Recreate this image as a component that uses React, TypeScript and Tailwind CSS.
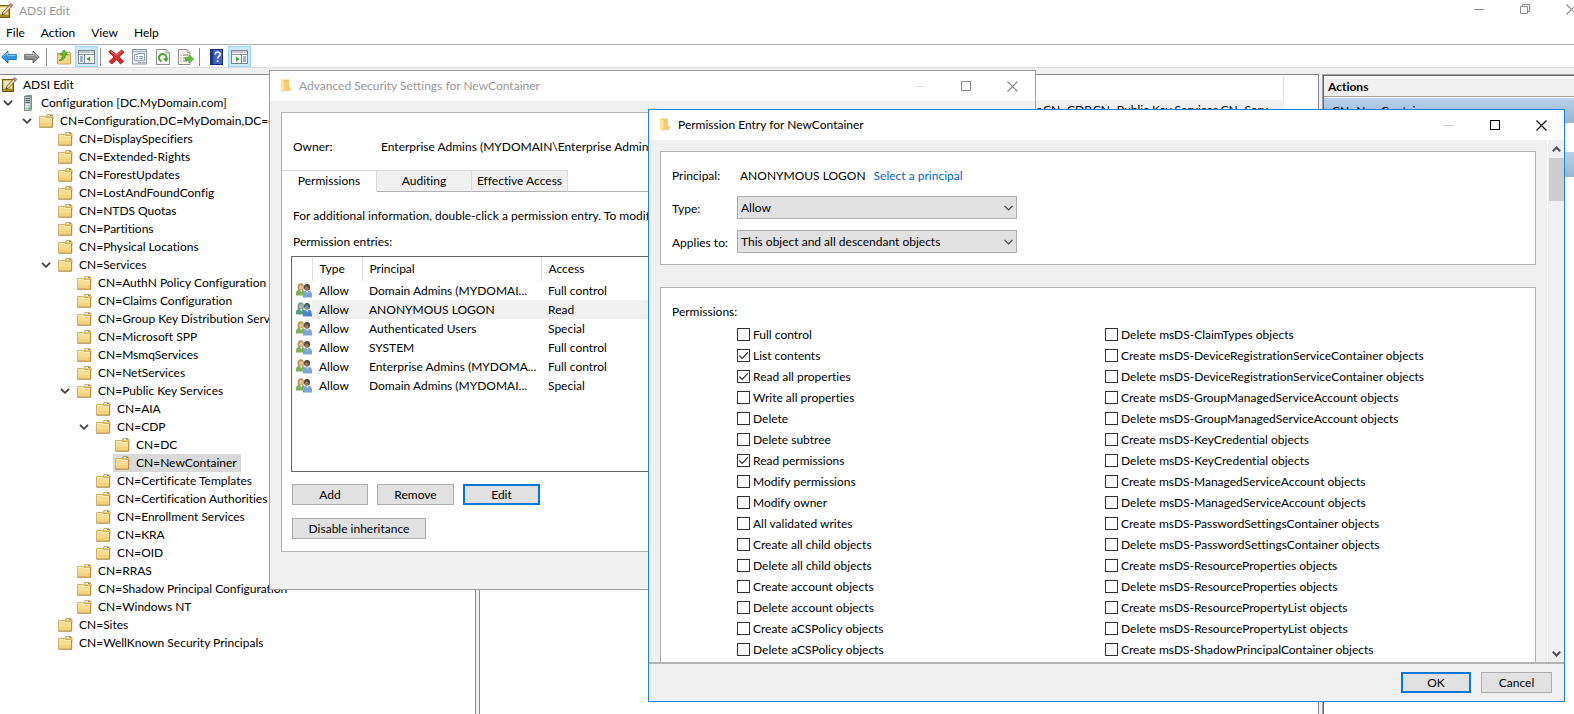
import type { ReactNode } from "react";

type TreeNode = { label: string; depth: number; open?: boolean; icon?: "app" | "server"; selected?: boolean };

const indent = [
  "pl-0",
  "pl-0",
  "pl-[19px]",
  "pl-[38px]",
  "pl-[57px]",
  "pl-[76px]",
  "pl-[95px]",
];

const tree: TreeNode[] = [
  { label: "ADSI Edit", depth: 0, icon: "app" },
  { label: "Configuration [DC.MyDomain.com]", depth: 1, open: true, icon: "server" },
  { label: "CN=Configuration,DC=MyDomain,DC=com", depth: 2, open: true },
  { label: "CN=DisplaySpecifiers", depth: 3 },
  { label: "CN=Extended-Rights", depth: 3 },
  { label: "CN=ForestUpdates", depth: 3 },
  { label: "CN=LostAndFoundConfig", depth: 3 },
  { label: "CN=NTDS Quotas", depth: 3 },
  { label: "CN=Partitions", depth: 3 },
  { label: "CN=Physical Locations", depth: 3 },
  { label: "CN=Services", depth: 3, open: true },
  { label: "CN=AuthN Policy Configuration", depth: 4 },
  { label: "CN=Claims Configuration", depth: 4 },
  { label: "CN=Group Key Distribution Service", depth: 4 },
  { label: "CN=Microsoft SPP", depth: 4 },
  { label: "CN=MsmqServices", depth: 4 },
  { label: "CN=NetServices", depth: 4 },
  { label: "CN=Public Key Services", depth: 4, open: true },
  { label: "CN=AIA", depth: 5 },
  { label: "CN=CDP", depth: 5, open: true },
  { label: "CN=DC", depth: 6 },
  { label: "CN=NewContainer", depth: 6, selected: true },
  { label: "CN=Certificate Templates", depth: 5 },
  { label: "CN=Certification Authorities", depth: 5 },
  { label: "CN=Enrollment Services", depth: 5 },
  { label: "CN=KRA", depth: 5 },
  { label: "CN=OID", depth: 5 },
  { label: "CN=RRAS", depth: 4 },
  { label: "CN=Shadow Principal Configuration", depth: 4 },
  { label: "CN=Windows NT", depth: 4 },
  { label: "CN=Sites", depth: 3 },
  { label: "CN=WellKnown Security Principals", depth: 3 },
];

const entries = [
  { principal: "Domain Admins (MYDOMAI...", access: "Full control" },
  { principal: "ANONYMOUS LOGON", access: "Read", selected: true },
  { principal: "Authenticated Users", access: "Special" },
  { principal: "SYSTEM", access: "Full control" },
  { principal: "Enterprise Admins (MYDOMA...", access: "Full control" },
  { principal: "Domain Admins (MYDOMAI...", access: "Special" },
];

const leftPermissions = [
  "Full control",
  "List contents",
  "Read all properties",
  "Write all properties",
  "Delete",
  "Delete subtree",
  "Read permissions",
  "Modify permissions",
  "Modify owner",
  "All validated writes",
  "Create all child objects",
  "Delete all child objects",
  "Create account objects",
  "Delete account objects",
  "Create aCSPolicy objects",
  "Delete aCSPolicy objects",
];

const rightPermissions = [
  "Delete msDS-ClaimTypes objects",
  "Create msDS-DeviceRegistrationServiceContainer objects",
  "Delete msDS-DeviceRegistrationServiceContainer objects",
  "Create msDS-GroupManagedServiceAccount objects",
  "Delete msDS-GroupManagedServiceAccount objects",
  "Create msDS-KeyCredential objects",
  "Delete msDS-KeyCredential objects",
  "Create msDS-ManagedServiceAccount objects",
  "Delete msDS-ManagedServiceAccount objects",
  "Create msDS-PasswordSettingsContainer objects",
  "Delete msDS-PasswordSettingsContainer objects",
  "Create msDS-ResourceProperties objects",
  "Delete msDS-ResourceProperties objects",
  "Create msDS-ResourcePropertyList objects",
  "Delete msDS-ResourcePropertyList objects",
  "Create msDS-ShadowPrincipalContainer objects",
];

const granted = ["List contents", "Read all properties", "Read permissions"];

/* ---------- icons ---------- */

function AppIcon() {
  return (
    <svg width="16" height="16" viewBox="1 0 16 16" className="shrink-0">
      <rect x="1.500" y="2.500" width="11" height="12" fill="#c9a227" stroke="#6b5a1c" />
      <rect x="2.500" y="3.500" width="8.500" height="8" fill="#f0e3a8" />
      <path d="M3.500 5.500h5M3.500 7.500h4" stroke="#fff8dc" />
      <path d="M2 12h10v2H2z" fill="#a9851c" />
      <path d="M5 12l0.800-2.800L12.500 2l2 1.700-6.700 7.200z" fill="#ecd6b0" stroke="#5a4a3a" strokeWidth="0.800" />
      <path d="M12.300 2l1.400-1.500 2.200 1.800-1.400 1.600z" fill="#c98a8e" stroke="#8a4a50" strokeWidth="0.600" />
      <path d="M5 12l0.500-1.700 1.200 1z" fill="#222" />
    </svg>
  );
}

function ServerIcon() {
  return (
    <svg width="16" height="16" viewBox="0 0 16 16" className="shrink-0">
      <path d="M4.500 1.500L6 0h6v14l-1.500 1.500h-6z" fill="#87949a" />
      <rect x="4.500" y="1.500" width="6.500" height="14" fill="#bfcdd3" stroke="#74828a" strokeWidth="0.800" />
      <path d="M5.500 3.500h4.500M5.500 5.500h4.500M5.500 7.500h4.500" stroke="#4d5d66" />
      <path d="M5.500 9.500h4.500M5.500 11.500h3" stroke="#e8f1f4" />
      <rect x="8.500" y="12.500" width="2" height="2" fill="#4fd02a" />
    </svg>
  );
}

function FolderIcon() {
  return (
    <svg width="16" height="16" viewBox="1 0 16 16" className="shrink-0">
      <path d="M8 3l1-1.500h5L15 3v3H8z" fill="#ecc970" stroke="#c39d4e" strokeWidth="0.800" />
      <rect x="10" y="2" width="3" height="1" fill="#fff" />
      <rect x="12" y="2" width="1.500" height="1" fill="#4a8fd0" />
      <path d="M1.500 3.500H7l1.200 1H14.500v9.500h-13z" fill="#f8dd90" stroke="#cdaa60" strokeWidth="0.900" />
      <path d="M2.300 4.500h4.400l1.300 1h5.700" stroke="#fdf0c0" fill="none" />
      <path d="M2 10h12v3.500H2z" fill="#f3d17d" />
      <path d="M1.500 14.200h13.200V5" stroke="#a98744" fill="none" strokeWidth="0.900" />
    </svg>
  );
}

function OpenFolderIcon() {
  return (
    <svg width="10" height="14" viewBox="0 0 10 14" className="shrink-0">
      <path d="M0 0.500h5l3 0V8h1.500v4H3z" fill="#f3cf6d" />
      <path d="M0 0.500l3.200 1.500v12L0 12z" fill="#fde49b" />
      <path d="M3.200 2h4V0.500" fill="none" stroke="#e3b84e" strokeWidth="0.500" />
    </svg>
  );
}

function PeopleIcon({ selected }: { selected?: boolean }) {
  return (
    <svg width="16" height="15" viewBox="0 0 16 15" className="block">
      <path d="M1.500 4.500C1.500 1.500 3 0.300 4.800 0.300S8.200 1.500 8 5l-1 3H2z" fill={selected ? "#7f9a8f" : "#b39a55"} />
      <ellipse cx="5.200" cy="4.500" rx="1.900" ry="2.400" fill={selected ? "#a9b9b4" : "#e0c49a"} />
      <path d="M0 12.500V10c0-2 1.800-3 3.600-3h2.200c1.900 0 3 1 3 3v2.500z" fill={selected ? "#4f9f86" : "#7fae55"} />
      <path d="M4 7l1.300 2.400L6.500 7z" fill="#eef3e6" />
      <ellipse cx="11" cy="4.300" rx="3" ry="3.200" fill={selected ? "#3d5872" : "#4b3f38"} />
      <ellipse cx="10.700" cy="5.500" rx="1.900" ry="2.300" fill={selected ? "#8193a0" : "#a9744f"} />
      <path d="M7 14.500v-3.200C7 9.200 8.300 8 10.200 8h2.200C14.500 8 16 9.200 16 11.300v3.200z" fill={selected ? "#4a86c8" : "#7ba5d6"} />
      <path d="M10 8l1.200 2.400L12.400 8z" fill="#dfe9f5" />
      {selected && <rect x="15" y="10" width="1" height="2" fill="#a8e000" />}
    </svg>
  );
}

function TreeChevron() {
  return (
    <svg width="10" height="6" viewBox="0 0 10 6" className="ml-[3px]">
      <path d="M1 0.800l4 4 4-4" fill="none" stroke="#404040" strokeWidth="1.800" />
    </svg>
  );
}

function MinimizeGlyph() {
  return (
    <svg width="10" height="11" viewBox="0 0 10 11">
      <path d="M0 5.500h10" stroke="currentColor" />
    </svg>
  );
}
function MaximizeGlyph() {
  return (
    <svg width="10" height="10" viewBox="0 0 10 10">
      <rect x="0.500" y="0.500" width="9" height="9" fill="none" stroke="currentColor" />
    </svg>
  );
}
function RestoreGlyph() {
  return (
    <svg width="10" height="10" viewBox="0 0 10 10">
      <path d="M2.500 2.500v-2h7v7h-2M0.500 2.500h7v7h-7z" fill="none" stroke="currentColor" />
    </svg>
  );
}
function CloseGlyph() {
  return (
    <svg width="11" height="11" viewBox="0 0 11 11">
      <path d="M0.500 0.500l10 10M10.500 0.500l-10 10" stroke="currentColor" strokeWidth="1.100" />
    </svg>
  );
}

function ArrowIcon({ forward }: { forward?: boolean }) {
  return (
    <svg width="16" height="14" viewBox="0 0 16 14" className={forward ? "-scale-x-100" : ""}>
      <path
        d="M0.700 7L7 1v3.500h8.300v5H7V13z"
        fill={forward ? "#8f8f8f" : "#2f9be8"}
        stroke={forward ? "#5f5f5f" : "#1769b0"}
        strokeWidth="0.900"
        strokeLinejoin="round"
      />
      <path d="M2.500 6.500L6.500 2.800v2.600h8" fill="none" stroke={forward ? "#c2c2c2" : "#8fd0fa"} />
    </svg>
  );
}

function FolderUpIcon() {
  return (
    <svg width="16" height="16" viewBox="0 0 16 16">
      <path d="M1.500 4.500H8L9.500 3H14l0.500 1.500V15h-13z" fill="#e9c26a" stroke="#b98f36" strokeWidth="0.800" />
      <rect x="11" y="4" width="2.500" height="1" fill="#fff" />
      <rect x="2" y="7" width="12" height="7.500" fill="#f5d587" />
      <path d="M3 11.500C5.500 11 6.500 9 6.300 5.500h-2L8 1l3.500 4.500h-2c0 3.500-2.700 6.500-6.500 6z" fill="#5cc33c" stroke="#2f7d1a" strokeWidth="0.700" />
    </svg>
  );
}

function PaneIcon({ right }: { right?: boolean }) {
  return (
    <svg width="17" height="14" viewBox="0 0 17 14">
      <rect x="0.500" y="0.500" width="16" height="13" fill="#f4f6f8" stroke="#7b858e" />
      <path d="M1 2h15M1 4.500h15" stroke="#8b959e" strokeWidth="1.200" />
      <path d="M12 2h1M14 2h1" stroke="#fff" />
      <path d={right ? "M10.500 5v8" : "M6.500 5v8"} stroke="#7b858e" />
      <path d={right ? "M12 7h3M12 9h3M12 11h3" : "M2 7h3M2 9h3M2 11h3"} stroke="#4a6f9a" />
      <path d={right ? "M5 6.500v5l3.500-2.500z" : "M12 6.500v5L8.500 9z"} fill="#3fa62c" />
    </svg>
  );
}

function DeleteIcon() {
  return (
    <svg width="17" height="16" viewBox="0 0 17 16">
      <path
        d="M2.500 1L8.500 5.500 13.500 1 16 3l-4.800 5 4.300 4.500-3 2.500-4-4.500-4.500 4.500L1 12.500 6 8 0.800 3z"
        fill="#dc2a26"
        stroke="#a51512"
        strokeWidth="0.800"
        strokeLinejoin="round"
      />
      <path d="M2.800 2.300l5.700 4.500 5-4.500" fill="none" stroke="#f0807c" strokeWidth="0.900" />
    </svg>
  );
}

function PropertiesIcon() {
  return (
    <svg width="15" height="16" viewBox="0 0 15 16">
      <rect x="0.500" y="0.500" width="14" height="14.500" fill="#f2f4f6" stroke="#8b959e" />
      <path d="M1 2.500h13" stroke="#aeb8c0" strokeWidth="1.500" />
      <path d="M2.500 11.500v-6h3v-1h7v7z" fill="#fff" stroke="#8b9aa8" />
      <path d="M4 7.500h2M7 7.500h4M4 9.500h2M7 9.500h4" stroke="#7fa0c4" />
      <path d="M6 13.500h3M10 13.500h3" stroke="#8b959e" />
    </svg>
  );
}

function RefreshIcon() {
  return (
    <svg width="14" height="16" viewBox="0 0 14 16">
      <path d="M0.500 0.500h9.500l3.500 3.500v11.500H0.500z" fill="#fafafa" stroke="#8f8f8f" />
      <path d="M10 0.500v3.500h3.500" fill="#ddd" stroke="#8f8f8f" strokeWidth="0.800" />
      <path d="M5.500 12.200A3.700 3.700 0 1 1 10.300 9.500" fill="none" stroke="#3fa62c" strokeWidth="2" />
      <path d="M7 9.200h6l-3 3.800z" fill="#3fa62c" />
    </svg>
  );
}

function ExportIcon() {
  return (
    <svg width="16" height="16" viewBox="0 0 16 16">
      <path d="M0.500 0.500h8.500l3 3v12H0.500z" fill="#fbf8ea" stroke="#8f8f8f" />
      <path d="M9 0.500v3h3" fill="#ddd" stroke="#8f8f8f" strokeWidth="0.800" />
      <path d="M2.500 6h1M5 6h5M2.500 9h1M5 9h3M2.500 12h1M5 12h4" stroke="#777" />
      <path d="M7.500 8.500h3.500V6l4.800 4-4.800 4v-2.500H7.500z" fill="#5cc33c" stroke="#3a8c22" strokeWidth="0.600" />
    </svg>
  );
}

function HelpIcon() {
  return (
    <svg width="13" height="16" viewBox="0 0 13 16">
      <rect x="0.500" y="0.500" width="12" height="15" fill="#3f63c4" stroke="#1c2f78" />
      <path d="M1 1h2.500v14H1z" fill="#22398c" />
      <path d="M5.200 5.500c0-3.200 5-3.200 5-0.300 0 2-2.500 2-2.500 4.300" fill="none" stroke="#fff" strokeWidth="1.600" />
      <rect x="6.800" y="11.200" width="1.800" height="1.800" fill="#fff" />
    </svg>
  );
}

/* ---------- shared pieces ---------- */

function CaptionButtons({
  restore,
  tone,
  minTone,
}: {
  restore?: boolean;
  tone: string;
  minTone: string;
}) {
  return (
    <div className={`flex shrink-0 self-stretch ${tone}`}>
      <button type="button" aria-label="Minimize" className={`flex w-[46px] items-center justify-center ${minTone}`}>
        <MinimizeGlyph />
      </button>
      <button type="button" aria-label="Maximize" className="flex w-[46px] items-center justify-center">
        {restore ? <RestoreGlyph /> : <MaximizeGlyph />}
      </button>
      <button type="button" aria-label="Close" className="flex w-[46px] items-center justify-center">
        <CloseGlyph />
      </button>
    </div>
  );
}

function PushButton({ children, width, primary }: { children: ReactNode; width: string; primary?: boolean }) {
  return (
    <button
      type="button"
      className={`flex h-[21px] items-center justify-center bg-[#e1e1e1] ${width} ${
        primary ? "border-2 border-[#0078d7]" : "border border-[#adadad]"
      }`}
    >
      {children}
    </button>
  );
}

function ToolButton({ label, active, children }: { label: string; active?: boolean; children: ReactNode }) {
  return (
    <button
      type="button"
      aria-label={label}
      className={`flex h-[21px] w-[23px] items-center justify-center border ${
        active ? "border-[#99d1ff] bg-[#cce8ff]" : "border-transparent"
      }`}
    >
      {children}
    </button>
  );
}

function Separator() {
  return <span className="h-[18px] w-px bg-[#8d8d8d]" />;
}

function Dropdown({ id, options }: { id: string; options: string[] }) {
  return (
    <div className="grid w-[280px] items-center">
      <select
        id={id}
        className="col-start-1 row-start-1 h-[23px] w-full appearance-none border border-[#adadad] bg-[#e1e1e1] pl-[3px]"
      >
        {options.map((option) => (
          <option key={option}>{option}</option>
        ))}
      </select>
      <svg
        width="9"
        height="6"
        viewBox="0 0 9 6"
        className="pointer-events-none col-start-1 row-start-1 mr-1 justify-self-end"
      >
        <path d="M0.500 0.800l4 4 4-4" fill="none" stroke="#444" strokeWidth="1.200" />
      </svg>
    </div>
  );
}

function PermissionList({ names }: { names: string[] }) {
  return (
    <ul>
      {names.map((name) => (
        <li key={name} className="flex h-[21px] items-center">
          <label className="flex items-center gap-[3px] whitespace-nowrap">
            <span className="grid">
              <input
                type="checkbox"
                defaultChecked={granted.includes(name)}
                className="peer col-start-1 row-start-1 size-[13px] appearance-none border border-[#333] bg-white"
              />
              <svg
                width="13"
                height="13"
                viewBox="0 0 13 13"
                className="pointer-events-none invisible col-start-1 row-start-1 peer-checked:visible"
              >
                <path d="M2.300 6.500l2.900 2.900 5.600-6" fill="none" stroke="#333" strokeWidth="1.200" />
              </svg>
            </span>
            {name}
          </label>
        </li>
      ))}
    </ul>
  );
}

/* ---------- windows ---------- */

function MainWindow() {
  return (
    <div className="flex h-full flex-col bg-white">
      <header className="flex h-[22px] shrink-0 items-center justify-between overflow-hidden">
        <h1 className="flex items-center gap-[5px] text-[#999]">
          <span className="-ml-0.5 flex">
            <AppIcon />
          </span>
          ADSI Edit
        </h1>
        <div className="-mr-5 flex h-[18px] self-start">
          <CaptionButtons restore tone="text-[#8a8a8a]" minTone="" />
        </div>
      </header>
      <nav className="flex h-[22px] shrink-0 items-center gap-4 pl-[6px]">
        <button type="button">File</button>
        <button type="button">Action</button>
        <button type="button">View</button>
        <button type="button">Help</button>
      </nav>
      <div className="flex h-6 shrink-0 items-end border-t border-b border-t-[#b0b0b0] border-b-[#dcdcdc]">
        <div className="-ml-[3px] flex items-center">
          <ToolButton label="Back">
            <ArrowIcon />
          </ToolButton>
          <ToolButton label="Forward">
            <ArrowIcon forward />
          </ToolButton>
        </div>
        <div className="ml-[3px] flex items-center gap-[5px]">
          <Separator />
          <div className="flex items-center">
            <ToolButton label="Up one level">
              <FolderUpIcon />
            </ToolButton>
            <ToolButton label="Show console tree" active>
              <PaneIcon />
            </ToolButton>
          </div>
        </div>
        <div className="ml-[2px] flex items-center gap-1">
          <Separator />
          <div className="flex items-center">
            <ToolButton label="Delete">
              <DeleteIcon />
            </ToolButton>
            <ToolButton label="Properties">
              <PropertiesIcon />
            </ToolButton>
            <ToolButton label="Refresh">
              <RefreshIcon />
            </ToolButton>
            <ToolButton label="Export list">
              <ExportIcon />
            </ToolButton>
          </div>
        </div>
        <div className="ml-[2px] flex items-center gap-[5px]">
          <Separator />
          <div className="flex items-center">
            <ToolButton label="Help">
              <HelpIcon />
            </ToolButton>
            <ToolButton label="Show action pane" active>
              <PaneIcon right />
            </ToolButton>
          </div>
        </div>
      </div>
      <div className="flex min-h-0 flex-1 bg-[#f0f0f0] pt-[6px]">
        <aside className="w-[476px] shrink-0 overflow-hidden border-t border-r border-[#828790] bg-white pt-px">
          <ul>
            {tree.map((node) => (
              <li key={node.label} className={`flex h-[18px] items-center ${indent[node.depth]}`}>
                {node.depth > 0 && <span className="w-[18px] shrink-0">{node.open && <TreeChevron />}</span>}
                <span
                  className={`flex h-[18px] items-center gap-[5px] pr-1 pl-[2px] whitespace-nowrap ${
                    node.selected ? "bg-[#d9d9d9]" : ""
                  }`}
                >
                  {node.icon === "app" ? <AppIcon /> : node.icon === "server" ? <ServerIcon /> : <FolderIcon />}
                  {node.label}
                </span>
              </li>
            ))}
          </ul>
        </aside>
        <main className="ml-[3px] min-w-0 flex-1 overflow-hidden border border-b-0 border-[#828790] bg-white pt-px pr-[34px]">
          <div className="h-6 border-r border-[#e0e0e0]" />
          <p className="flex h-[19px] items-center justify-end overflow-hidden bg-[#f0f0f0] pr-2 whitespace-nowrap">
            CN=NewContainer,CN=CDP,CN=Public Key Services,CN=Serv...
          </p>
        </main>
        <aside className="ml-[3px] w-[252px] shrink-0 border-t border-l border-[#a0a0a0]">
          <div className="h-full border-t border-l border-[#696969] bg-white pt-[2px]">
            <h2 className="flex h-[19px] items-center border-b border-[#a0a0a0] bg-[#f0f0f0] pl-1 font-bold">
              Actions
            </h2>
            <p className="mt-px flex h-[25px] items-center bg-linear-to-b from-[#b9d1ea] to-[#9ab4d3] pl-2">
              CN=NewContainer
            </p>
            <div className="mt-[29px] h-[25px] bg-linear-to-b from-[#b9d1ea] to-[#9ab4d3]" />
          </div>
        </aside>
      </div>
    </div>
  );
}

function SecurityDialog() {
  return (
    <section className="absolute top-[70px] left-[269px] w-[767px] border border-[#a0a0a0] bg-[#f0f0f0]">
      <header className="flex h-[30px] items-center justify-between bg-white pl-[11px]">
        <h2 className="flex items-center gap-2 text-[#999]">
          <OpenFolderIcon />
          Advanced Security Settings for NewContainer
        </h2>
        <CaptionButtons tone="text-[#8a8a8a]" minTone="text-[#e2e2e2]" />
      </header>
      <div className="px-[11px] pt-[11px] pb-[37px]">
        <div className="border border-[#b0b0b0] bg-white pt-6 pb-3">
          <dl className="flex h-5 items-center pl-[11px]">
            <dt className="w-[88px]">Owner:</dt>
            <dd>Enterprise Admins (MYDOMAIN\Enterprise Admins)</dd>
          </dl>
          <div role="tablist" className="mt-[13px] flex h-[22px]">
            <button
              type="button"
              role="tab"
              aria-selected
              className="w-[95px] border-t border-r border-b border-[#d9d9d9] border-b-white"
            >
              Permissions
            </button>
            <button
              type="button"
              role="tab"
              className="w-[95px] border-t border-r border-b border-[#d9d9d9] border-b-[#b0b0b0] bg-[#f0f0f0]"
            >
              Auditing
            </button>
            <button
              type="button"
              role="tab"
              className="w-[96px] border-t border-r border-b border-[#d9d9d9] border-b-[#b0b0b0] bg-[#f0f0f0]"
            >
              Effective Access
            </button>
            <span className="flex-1 border-b border-[#b0b0b0]" />
          </div>
          <div className="px-[9px]">
            <p className="mt-[14px] flex h-5 items-center pl-[2px] whitespace-nowrap">
              For additional information, double-click a permission entry. To modify
            </p>
            <p className="mt-[6px] flex h-5 items-center pl-[2px]">Permission entries:</p>
            <div className="mt-1 min-h-[216px] border border-[#646464]">
              <table className="w-full table-fixed border-collapse text-left">
                <thead>
                  <tr className="h-6">
                    <th className="w-5 border-r border-[#e0e0e0]" />
                    <th className="w-[50px] border-r border-[#e0e0e0] pl-[7px] font-normal">Type</th>
                    <th className="w-[179px] border-r border-[#e0e0e0] pl-[7px] font-normal">Principal</th>
                    <th className="pl-[7px] font-normal">Access</th>
                  </tr>
                </thead>
                <tbody>
                  {entries.map((entry, index) => {
                    const cell = entry.selected ? "bg-[#f0f0f0] p-0 pl-[7px]" : "p-0 pl-[7px]";
                    return (
                      <tr key={index} className="h-[19px] whitespace-nowrap">
                        <td className="p-0 pl-1">
                          <PeopleIcon selected={entry.selected} />
                        </td>
                        <td className={cell}>Allow</td>
                        <td className={cell}>{entry.principal}</td>
                        <td className={cell}>{entry.access}</td>
                      </tr>
                    );
                  })}
                </tbody>
              </table>
            </div>
            <div className="mt-3 flex gap-[9px] pl-px">
              <PushButton width="w-[76px]">Add</PushButton>
              <PushButton width="w-[77px]">Remove</PushButton>
              <PushButton width="w-[77px]" primary>
                Edit
              </PushButton>
            </div>
            <div className="mt-[13px] flex pl-px">
              <PushButton width="w-[134px]">Disable inheritance</PushButton>
            </div>
          </div>
        </div>
      </div>
    </section>
  );
}

function PermissionDialog() {
  return (
    <section className="absolute top-[109px] right-[9px] left-[648px] border border-[#1883d7] bg-[#f0f0f0]">
      <header className="flex h-[30px] items-center justify-between bg-white pl-[11px]">
        <h2 className="flex items-center gap-2">
          <OpenFolderIcon />
          Permission Entry for NewContainer
        </h2>
        <CaptionButtons tone="text-black" minTone="text-[#c8c8c8]" />
      </header>
      <div className="flex border-b-2 border-[#b4b4b4]">
        <div className="flex-1 px-[11px] pt-[11px]">
          <div className="flex flex-col border border-[#b0b0b0] bg-white pt-3 pb-[11px] pl-[11px]">
            <div className="flex h-6 items-center">
              <span className="w-[68px]">Principal:</span>
              <span>ANONYMOUS LOGON</span>
              <a href="#principal" className="ml-2 text-[#0066cc]">
                Select a principal
              </a>
            </div>
            <div className="mt-2 flex items-center">
              <label htmlFor="type" className="w-[65px] pt-0.5">
                Type:
              </label>
              <Dropdown id="type" options={["Allow", "Deny"]} />
            </div>
            <div className="mt-[11px] flex items-center">
              <label htmlFor="applies-to" className="w-[65px] pt-0.5">
                Applies to:
              </label>
              <Dropdown id="applies-to" options={["This object and all descendant objects", "This object only"]} />
            </div>
          </div>
          <div className="mt-[22px] border border-b-0 border-[#b0b0b0] bg-white pt-[14px] pb-[2px] pl-[11px]">
            <h3 className="flex h-5 items-center">Permissions:</h3>
            <div className="mt-[2px] grid grid-cols-[368px_1fr] pl-[65px]">
              <PermissionList names={leftPermissions} />
              <PermissionList names={rightPermissions} />
            </div>
          </div>
        </div>
        <div className="flex w-[17px] flex-col items-center border-l border-white">
          <svg width="9" height="6" viewBox="0 0 9 6" className="my-[6px]">
            <path d="M0.800 5.200l3.700-3.700 3.700 3.700" fill="none" stroke="#505050" strokeWidth="2" />
          </svg>
          <div className="h-[43px] w-[15px] bg-[#cdcdcd]" />
          <svg width="9" height="6" viewBox="0 0 9 6" className="mt-auto mb-[5px]">
            <path d="M0.800 0.800l3.700 3.700 3.700-3.700" fill="none" stroke="#505050" strokeWidth="2" />
          </svg>
        </div>
      </div>
      <footer className="flex justify-end gap-[10px] pt-2 pr-3 pb-2">
        <PushButton width="w-[70px]" primary>
          OK
        </PushButton>
        <PushButton width="w-[71px]">Cancel</PushButton>
      </footer>
    </section>
  );
}

export default function App() {
  return (
    <div className="relative h-screen overflow-hidden font-['Lato','Segoe_UI',sans-serif] text-xs text-black [font-variant-ligatures:none]">
      <MainWindow />
      <SecurityDialog />
      <PermissionDialog />
    </div>
  );
}
